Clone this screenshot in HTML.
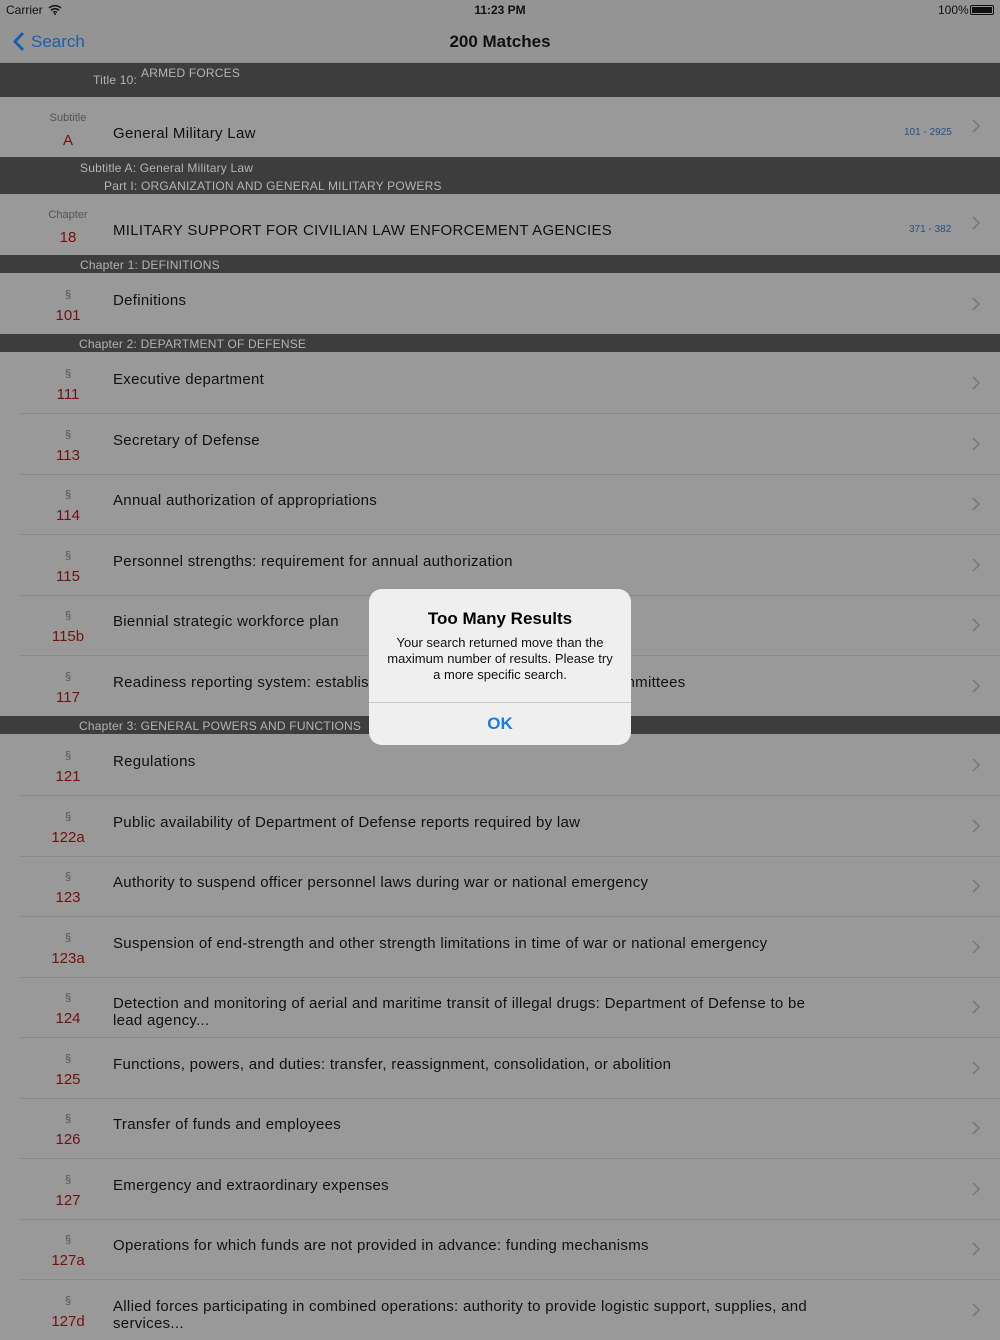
<!DOCTYPE html>
<html><head><meta charset="utf-8"><style>
*{margin:0;padding:0;box-sizing:border-box}
body{width:1000px;height:1334px;overflow:hidden;background:#999;font-family:"Liberation Sans",sans-serif;position:relative;color:#111}
.a{position:absolute}
.dark{position:absolute;left:0;width:1000px;background:#3d3d3d;color:#b4b4b4;font-size:12px;letter-spacing:0.2px}
.row{position:absolute;left:0;width:1000px;height:61px}
.row .s{position:absolute;left:28px;width:80px;text-align:center;top:16px;font-size:11px;color:#555}
.row .n{position:absolute;left:28px;width:80px;text-align:center;top:34px;font-size:15px;color:#741010}
.row .t{position:absolute;left:113px;top:19px;font-size:15px;color:#111;line-height:17px;width:720px;letter-spacing:0.3px}
.row .c{position:absolute;left:972px;top:24px;width:9px;height:14px}
.line{position:absolute;left:20px;right:0;bottom:-1px;height:1px;background:#8a8a8a}
</style></head><body>
<div class="a" style="left:0;top:0;width:1000px;height:63px;background:#949494;border-bottom:1px solid #888"></div>
<div class="a" style="left:6px;top:3px;font-size:12px">Carrier</div>
<svg class="a" style="left:48px;top:4px" width="14" height="11" viewBox="0 0 14 11"><path d="M1 4a9 9 0 0 1 12 0M3 6.3a6 6 0 0 1 8 0M5 8.5a3 3 0 0 1 4 0" stroke="#111" stroke-width="1.5" fill="none"/><circle cx="7" cy="10" r="1" fill="#111"/></svg>
<div class="a" style="left:0;width:1000px;text-align:center;top:3px;font-size:12px;font-weight:bold">11:23 PM</div>
<div class="a" style="left:938px;top:3px;font-size:12px">100%</div>
<div class="a" style="left:970px;top:5px;width:24px;height:10px;border:1px solid #111;border-radius:2px;padding:1px"><div style="background:#111;width:100%;height:100%"></div></div>
<svg class="a" style="left:12px;top:31px" width="13" height="21" viewBox="0 0 13 21"><path d="M11 2L3 10.5 11 19" stroke="#1a5fb0" stroke-width="3" fill="none"/></svg>
<div class="a" style="left:31px;top:32px;font-size:17px;color:#1a5fb0">Search</div>
<div class="a" style="left:0;width:1000px;text-align:center;top:32px;font-size:17px;font-weight:bold;color:#111">200 Matches</div>

<div class="dark" style="top:63px;height:34px"><span class="a" style="left:93px;top:10px;font-size:12px">Title 10:</span><span class="a" style="left:141px;top:3px">ARMED FORCES</span></div>
<div class="row" style="top:97px;height:60px"><div class="s" style="top:15px">Subtitle</div><div class="n" style="top:35px">A</div><div class="t" style="top:28px">General Military Law</div><div class="a" style="left:904px;top:30px;font-size:10px;color:#2b4f80">101 - 2925</div><svg class="c" style="top:22px" viewBox="0 0 9 14"><path d="M1 1l6 6-6 6" stroke="#777" stroke-width="1.5" fill="none"/></svg></div>
<div class="dark" style="top:157px;height:37px"><span class="a" style="left:80px;top:4px">Subtitle A: General Military Law</span><span class="a" style="left:104px;top:22px">Part I: ORGANIZATION AND GENERAL MILITARY POWERS</span></div>
<div class="row" style="top:194px;height:61px"><div class="s" style="top:15px">Chapter</div><div class="n" style="top:35px">18</div><div class="t" style="top:28px">MILITARY SUPPORT FOR CIVILIAN LAW ENFORCEMENT AGENCIES</div><div class="a" style="left:909px;top:30px;font-size:10px;color:#2b4f80">371 - 382</div><svg class="c" style="top:22px" viewBox="0 0 9 14"><path d="M1 1l6 6-6 6" stroke="#777" stroke-width="1.5" fill="none"/></svg></div>
<div class="dark" style="top:255px;height:18px"><span class="a" style="left:80px;top:3px">Chapter 1: DEFINITIONS</span></div>
<div class="row" style="top:273px"><div class="s">§</div><div class="n">101</div><div class="t">Definitions</div><svg class="c" viewBox="0 0 9 14"><path d="M1 1l6 6-6 6" stroke="#777" stroke-width="1.5" fill="none"/></svg></div>
<div class="dark" style="top:334px;height:18px"><span class="a" style="left:79px;top:3px">Chapter 2: DEPARTMENT OF DEFENSE</span></div>

<div class="row" style="top:352px"><div class="s">§</div><div class="n">111</div><div class="t">Executive department</div><svg class="c" viewBox="0 0 9 14"><path d="M1 1l6 6-6 6" stroke="#777" stroke-width="1.5" fill="none"/></svg><div class="line"></div></div>
<div class="row" style="top:413px"><div class="s">§</div><div class="n">113</div><div class="t">Secretary of Defense</div><svg class="c" viewBox="0 0 9 14"><path d="M1 1l6 6-6 6" stroke="#777" stroke-width="1.5" fill="none"/></svg><div class="line"></div></div>
<div class="row" style="top:473px"><div class="s">§</div><div class="n">114</div><div class="t">Annual authorization of appropriations</div><svg class="c" viewBox="0 0 9 14"><path d="M1 1l6 6-6 6" stroke="#777" stroke-width="1.5" fill="none"/></svg><div class="line"></div></div>
<div class="row" style="top:534px"><div class="s">§</div><div class="n">115</div><div class="t">Personnel strengths: requirement for annual authorization</div><svg class="c" viewBox="0 0 9 14"><path d="M1 1l6 6-6 6" stroke="#777" stroke-width="1.5" fill="none"/></svg><div class="line"></div></div>
<div class="row" style="top:594px"><div class="s">§</div><div class="n">115b</div><div class="t">Biennial strategic workforce plan</div><svg class="c" viewBox="0 0 9 14"><path d="M1 1l6 6-6 6" stroke="#777" stroke-width="1.5" fill="none"/></svg><div class="line"></div></div>
<div class="row" style="top:655px"><div class="s">§</div><div class="n">117</div><div class="t">Readiness reporting system: establishment; reporting to congressional committees</div><svg class="c" viewBox="0 0 9 14"><path d="M1 1l6 6-6 6" stroke="#777" stroke-width="1.5" fill="none"/></svg></div>
<div class="dark" style="top:716px;height:18px"><span class="a" style="left:79px;top:3px">Chapter 3: GENERAL POWERS AND FUNCTIONS</span></div>

<div class="row" style="top:734px"><div class="s">§</div><div class="n">121</div><div class="t">Regulations</div><svg class="c" viewBox="0 0 9 14"><path d="M1 1l6 6-6 6" stroke="#777" stroke-width="1.5" fill="none"/></svg><div class="line"></div></div>
<div class="row" style="top:795px"><div class="s">§</div><div class="n">122a</div><div class="t">Public availability of Department of Defense reports required by law</div><svg class="c" viewBox="0 0 9 14"><path d="M1 1l6 6-6 6" stroke="#777" stroke-width="1.5" fill="none"/></svg><div class="line"></div></div>
<div class="row" style="top:855px"><div class="s">§</div><div class="n">123</div><div class="t">Authority to suspend officer personnel laws during war or national emergency</div><svg class="c" viewBox="0 0 9 14"><path d="M1 1l6 6-6 6" stroke="#777" stroke-width="1.5" fill="none"/></svg><div class="line"></div></div>
<div class="row" style="top:916px"><div class="s">§</div><div class="n">123a</div><div class="t">Suspension of end-strength and other strength limitations in time of war or national emergency</div><svg class="c" viewBox="0 0 9 14"><path d="M1 1l6 6-6 6" stroke="#777" stroke-width="1.5" fill="none"/></svg><div class="line"></div></div>
<div class="row" style="top:976px"><div class="s">§</div><div class="n">124</div><div class="t">Detection and monitoring of aerial and maritime transit of illegal drugs: Department of Defense to be lead agency...</div><svg class="c" viewBox="0 0 9 14"><path d="M1 1l6 6-6 6" stroke="#777" stroke-width="1.5" fill="none"/></svg><div class="line"></div></div>
<div class="row" style="top:1037px"><div class="s">§</div><div class="n">125</div><div class="t">Functions, powers, and duties: transfer, reassignment, consolidation, or abolition</div><svg class="c" viewBox="0 0 9 14"><path d="M1 1l6 6-6 6" stroke="#777" stroke-width="1.5" fill="none"/></svg><div class="line"></div></div>
<div class="row" style="top:1097px"><div class="s">§</div><div class="n">126</div><div class="t">Transfer of funds and employees</div><svg class="c" viewBox="0 0 9 14"><path d="M1 1l6 6-6 6" stroke="#777" stroke-width="1.5" fill="none"/></svg><div class="line"></div></div>
<div class="row" style="top:1158px"><div class="s">§</div><div class="n">127</div><div class="t">Emergency and extraordinary expenses</div><svg class="c" viewBox="0 0 9 14"><path d="M1 1l6 6-6 6" stroke="#777" stroke-width="1.5" fill="none"/></svg><div class="line"></div></div>
<div class="row" style="top:1218px"><div class="s">§</div><div class="n">127a</div><div class="t">Operations for which funds are not provided in advance: funding mechanisms</div><svg class="c" viewBox="0 0 9 14"><path d="M1 1l6 6-6 6" stroke="#777" stroke-width="1.5" fill="none"/></svg><div class="line"></div></div>
<div class="row" style="top:1279px"><div class="s">§</div><div class="n">127d</div><div class="t">Allied forces participating in combined operations: authority to provide logistic support, supplies, and services...</div><svg class="c" viewBox="0 0 9 14"><path d="M1 1l6 6-6 6" stroke="#777" stroke-width="1.5" fill="none"/></svg></div>

<div class="a" style="left:369px;top:589px;width:262px;height:156px;background:#efefef;border-radius:13px;overflow:hidden">
<div class="a" style="left:0;width:262px;top:20px;text-align:center;font-size:17px;font-weight:bold;color:#000">Too Many Results</div>
<div class="a" style="left:14px;width:234px;top:46px;text-align:center;font-size:13px;line-height:16px;color:#111">Your search returned move than the maximum number of results. Please try a more specific search.</div>
<div class="a" style="left:0;width:262px;top:113px;height:1px;background:#c8c8c8"></div>
<div class="a" style="left:0;width:262px;top:125px;text-align:center;font-size:17px;font-weight:bold;color:#1a7de0">OK</div>
</div>
</body></html>
